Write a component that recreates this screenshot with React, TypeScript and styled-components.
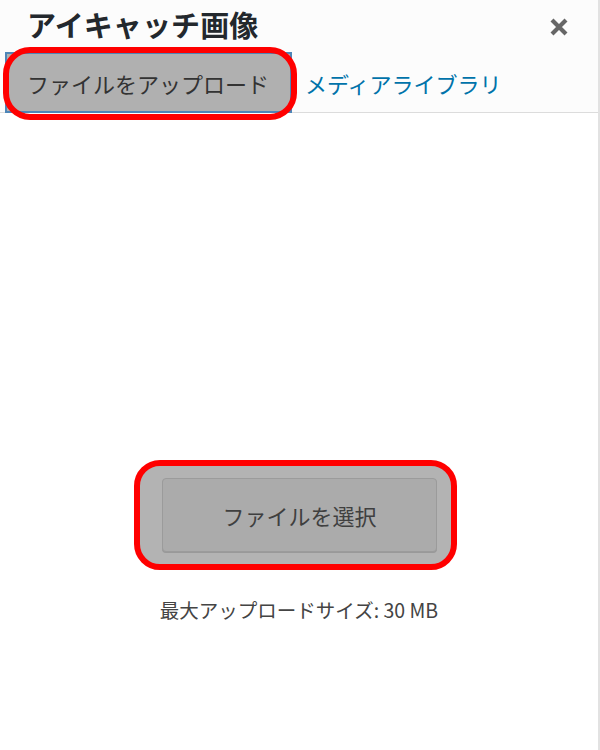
import React from "react";
import styled, { createGlobalStyle } from "styled-components";

const Global = createGlobalStyle`
  html, body { margin: 0; padding: 0; background: #ffffff; }
  body { font-family: "Noto Sans CJK JP", "Noto Sans", sans-serif; }
`;

const Frame = styled.div`
  width: 598px;
  height: 750px;
  border-right: 2px solid #e2e2e2;
  background: #ffffff;
  display: flex;
  flex-direction: column;
  overflow: hidden;
`;

const Header = styled.header`
  position: relative;
  height: 112px;
  background: #fcfcfc;
  border-bottom: 1px solid #dcdcdc;
  display: flex;
  flex-direction: column;
`;

const TitleRow = styled.div`
  display: flex;
  align-items: center;
  justify-content: space-between;
  padding: 6px 28px 0 27px;
  height: 36px;
`;

const Title = styled.h1`
  margin: 0;
  font-size: 29px;
  font-weight: 700;
  line-height: 36px;
  color: #23282d;
  letter-spacing: 0.1px;
`;

const Close = styled.button`
  border: 0;
  background: transparent;
  padding: 0;
  width: 22px;
  height: 22px;
  display: flex;
  align-items: center;
  justify-content: center;
  cursor: pointer;
  margin-top: 6px;
`;

const Tabs = styled.nav`
  display: flex;
  align-items: center;
  gap: 13px;
  padding-left: 5px;
  margin-top: 10px;
  position: relative;
  z-index: 1;
`;

const Tab = styled.div<{ $active?: boolean }>`
  position: relative;
  height: 61px;
  display: flex;
  align-items: center;
  font-size: 22px;
  line-height: 1;
  white-space: nowrap;
  color: ${(p) => (p.$active ? "#333333" : "#0073aa")};
  background: ${(p) => (p.$active ? "#b0b0b0" : "transparent")};
  border: ${(p) => (p.$active ? "2px solid #4e86b8" : "0")};
  padding: ${(p) => (p.$active ? "0 20px" : "0")};
  width: ${(p) => (p.$active ? "287px" : "auto")};
  box-sizing: border-box;
  ${(p) =>
    p.$active &&
    `
    &::after {
      content: "";
      position: absolute;
      top: -7px;
      left: -4px;
      right: -7px;
      bottom: -9px;
      border: 6px solid #ff0000;
      border-radius: 27px;
      pointer-events: none;
    }
  `}
`;

const Body = styled.main`
  flex: 1;
  display: flex;
  flex-direction: column;
  align-items: center;
  padding-top: 347px;
`;

const Highlight = styled.div`
  width: 323px;
  height: 110px;
  box-sizing: border-box;
  border: 6px solid #ff0000;
  border-radius: 26px;
  background: #b3b3b3;
  padding: 12px 14px 12px 22px;
  display: flex;
  margin-right: 7px;
`;

const SelectButton = styled.button`
  flex: 1;
  height: 74px;
  box-sizing: border-box;
  background: #ababab;
  border: 1px solid #9b9b9b;
  border-radius: 4px;
  box-shadow: 0 1px 0 #999999;
  font-family: "Noto Sans CJK JP", "Noto Sans", sans-serif;
  font-size: 22px;
  color: #3f3f3f;
  cursor: pointer;
  padding: 0;
`;

const Note = styled.p`
  margin: 26px 0 0 0;
  font-size: 19.5px;
  line-height: 27px;
  color: #444444;
`;

export default function App() {
  return (
    <>
      <Global />
      <Frame>
        <Header>
          <TitleRow>
            <Title>アイキャッチ画像</Title>
            <Close aria-label="閉じる">
              <svg width="20" height="20" viewBox="0 0 20 20">
                <path
                  d="M3 3 L17 17 M17 3 L3 17"
                  stroke="#666666"
                  strokeWidth="4.2"
                  strokeLinecap="butt"
                />
              </svg>
            </Close>
          </TitleRow>
          <Tabs>
            <Tab $active>ファイルをアップロード</Tab>
            <Tab>メディアライブラリ</Tab>
          </Tabs>
        </Header>
        <Body>
          <Highlight>
            <SelectButton>ファイルを選択</SelectButton>
          </Highlight>
          <Note>最大アップロードサイズ: 30 MB</Note>
        </Body>
      </Frame>
    </>
  );
}
